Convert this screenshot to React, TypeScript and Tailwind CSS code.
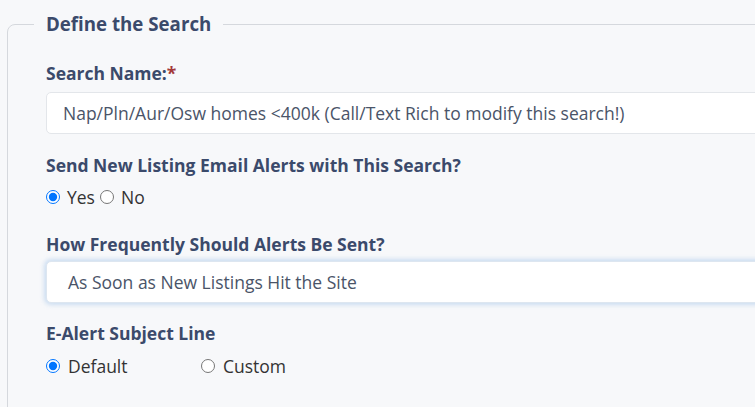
export default function App() {
  return (
    <div className="h-[407px] w-[755px] overflow-hidden bg-[#f7f8fa] pt-[12px] font-['Open_Sans',sans-serif]">
      <fieldset className="ml-[7px] w-[800px] min-h-[420px] rounded-tl-[8px] border border-[#d5d8dd] pl-[38px] pr-0 pt-[25px]">
        <legend className="ml-[-12px] px-[12px] text-[18.7px] font-bold leading-[24px] text-[#3b4a6b]">
          Define the Search
        </legend>
        <div className="flex flex-col">
          <label className="text-[17.5px] font-bold leading-[24px] text-[#3b4a6b]">
            Search Name:<span className="text-[#a33a3a]">*</span>
          </label>
          <div className="mt-[7px] flex h-[42px] items-center rounded-[5px] border border-[#e3e6ea] bg-white pl-[16px] text-[17.5px] text-[#4a5468]">
            Nap/Pln/Aur/Osw homes &lt;400k (Call/Text Rich to modify this search!)
          </div>

          <label className="mt-[19px] text-[17.5px] font-bold leading-[24px] text-[#3b4a6b]">
            Send New Listing Email Alerts with This Search?
          </label>
          <div className="mt-[8px] flex items-center text-[17.5px] leading-[24px] text-[#333]">
            <input type="radio" name="alerts" defaultChecked className="m-0 h-[14px] w-[14px]" />
            <span className="ml-[7px]">Yes</span>
            <input type="radio" name="alerts" className="ml-[5px] h-[14px] w-[14px]" />
            <span className="ml-[7px]">No</span>
          </div>

          <label className="mt-[23px] text-[17.5px] font-bold leading-[24px] text-[#3b4a6b]">
            How Frequently Should Alerts Be Sent?
          </label>
          <div className="mt-[5px] flex h-[42px] items-center rounded-[5px] border border-[#dde6f0] bg-white pl-[21px] text-[17.5px] text-[#4a5468] shadow-[0_0_4px_2px_rgba(170,200,235,0.55)]">
            As Soon as New Listings Hit the Site
          </div>

          <label className="mt-[18px] text-[17.5px] font-bold leading-[24px] text-[#3b4a6b]">
            E-Alert Subject Line
          </label>
          <div className="mt-[9px] flex items-center text-[17.5px] leading-[24px] text-[#333]">
            <input type="radio" name="subject" defaultChecked className="m-0 h-[14px] w-[14px]" />
            <span className="ml-[8px] w-[133px]">Default</span>
            <input type="radio" name="subject" className="m-0 h-[14px] w-[14px]" />
            <span className="ml-[8px]">Custom</span>
          </div>
        </div>
      </fieldset>
    </div>
  );
}
